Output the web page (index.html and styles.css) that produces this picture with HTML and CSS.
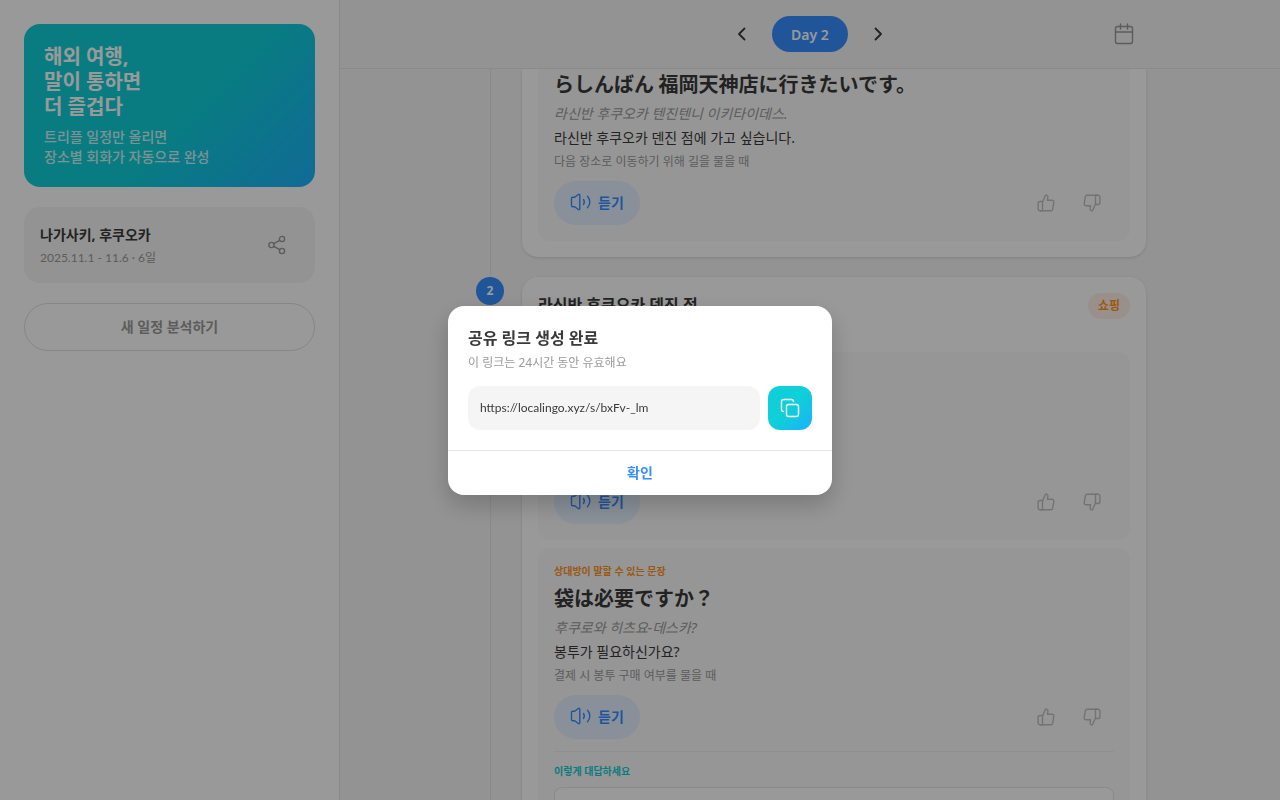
FILE: index.html
```html
<!DOCTYPE html>
<html lang="ko">
<head>
    <meta charset="UTF-8" />
    <meta name="viewport" content="width=device-width, initial-scale=1.0" />
    <title>Localingo</title>
    <link rel="stylesheet" href="styles.css">
</head>
<body>
    <!-- shared icons -->
    <svg class="sprite" aria-hidden="true">
        <symbol id="icon-volume" viewBox="0 0 22 20">
            <path d="M1.500 6.500v7c0 .8.500 1.200 1.200 1.200h2l3.600 2.800c.7.500 1.500.1 1.500-.7V3.200c0-.8-.8-1.200-1.500-.7L4.700 5.300h-2c-.7 0-1.200.4-1.200 1.200z" />
            <path d="M13.500 7.500a4.500 4.500 0 0 1 0 5" />
            <path d="M17.500 4.200a8.500 8.500 0 0 1 0 11.600" />
        </symbol>
        <symbol id="icon-like" viewBox="0 0 18 18">
            <path d="M5.500 8 8.300 1.800c.2-.5.7-.8 1.200-.7 1 .2 1.500 1 1.400 2l-.5 3.200h4.700c1.100 0 1.900 1 1.700 2l-1.200 7c-.2.900-.9 1.500-1.800 1.500H3.300" />
            <path d="M5.500 7.500v9.300H3.200c-1.200 0-2.100-.9-2.100-2.100V9.600c0-1.200.9-2.100 2.100-2.100z" />
        </symbol>
    </svg>

    <div class="app">
        <aside class="sidebar">
            <div class="banner">
                <h1>해외 여행,<br>말이 통하면<br>더 즐겁다</h1>
                <p>트리플 일정만 올리면<br>장소별 회화가 자동으로 완성</p>
            </div>

            <div class="trip">
                <div>
                    <h2>나가사키, 후쿠오카</h2>
                    <p>2025.11.1 - 11.6 · 6일</p>
                </div>
                <button class="icon-btn" aria-label="공유">
                    <svg width="20" height="20" viewBox="0 0 20 20">
                        <circle cx="15" cy="4" r="2.600" />
                        <circle cx="4.500" cy="10" r="2.600" />
                        <circle cx="15" cy="16" r="2.600" />
                        <path d="M6.800 8.700 12.700 5.300M6.800 11.300l5.900 3.400" />
                    </svg>
                </button>
            </div>

            <button class="new-btn">새 일정 분석하기</button>
        </aside>

        <main class="main">
            <header class="day-header">
                <div class="day-bar">
                    <nav class="day-nav">
                        <button class="icon-btn dark" aria-label="이전">
                            <svg width="20" height="20" viewBox="0 0 20 20"><path d="M12.500 4.500 7 10l5.500 5.500" /></svg>
                        </button>
                        <button class="day-pill">Day 2</button>
                        <button class="icon-btn dark" aria-label="다음">
                            <svg width="20" height="20" viewBox="0 0 20 20"><path d="M7.500 4.500 13 10l-5.500 5.500" /></svg>
                        </button>
                    </nav>
                    <button class="icon-btn calendar" aria-label="일정">
                        <svg width="24" height="24" viewBox="0 0 24 24">
                            <rect x="3.500" y="4.500" width="17" height="17" rx="2" />
                            <path d="M3.500 10h17M8.500 2v5M15.500 2v5" />
                        </svg>
                    </button>
                </div>
            </header>

            <div class="feed">
                <div class="timeline">
                    <section class="stop">
                        <div class="rail"></div>
                        <div class="card continued">
                            <article class="phrase">
                                <div class="phrase-text">
                                    <p class="ja" lang="ja">らしんばん 福岡天神店に行きたいです。</p>
                                    <p class="pron">라신반 후쿠오카 텐진텐니 이키타이데스.</p>
                                    <p class="ko">라신반 후쿠오카 덴진 점에 가고 싶습니다.</p>
                                    <p class="note">다음 장소로 이동하기 위해 길을 물을 때</p>
                                </div>
                                <div class="actions">
                                    <button class="listen"><svg width="22" height="20"><use href="#icon-volume" /></svg>듣기</button>
                                    <div class="votes">
                                        <button class="icon-btn" aria-label="좋아요"><svg width="18" height="18"><use href="#icon-like" /></svg></button>
                                        <button class="icon-btn down" aria-label="싫어요"><svg width="18" height="18"><use href="#icon-like" /></svg></button>
                                    </div>
                                </div>
                            </article>
                        </div>
                    </section>

                    <section class="stop">
                        <div class="rail"><span class="badge">2</span></div>
                        <div class="card">
                            <div class="card-head">
                                <h3>라신반 후쿠오카 덴진 점</h3>
                                <span class="tag">쇼핑</span>
                            </div>

                            <article class="phrase">
                                <div class="phrase-text"></div>
                                <div class="actions">
                                    <button class="listen"><svg width="22" height="20"><use href="#icon-volume" /></svg>듣기</button>
                                    <div class="votes">
                                        <button class="icon-btn" aria-label="좋아요"><svg width="18" height="18"><use href="#icon-like" /></svg></button>
                                        <button class="icon-btn down" aria-label="싫어요"><svg width="18" height="18"><use href="#icon-like" /></svg></button>
                                    </div>
                                </div>
                            </article>

                            <article class="phrase">
                                <p class="label orange">상대방이 말할 수 있는 문장</p>
                                <div class="phrase-text">
                                    <p class="ja" lang="ja">袋は必要ですか？</p>
                                    <p class="pron">후쿠로와 히츠요-데스카?</p>
                                    <p class="ko">봉투가 필요하신가요?</p>
                                    <p class="note">결제 시 봉투 구매 여부를 물을 때</p>
                                </div>
                                <div class="actions">
                                    <button class="listen"><svg width="22" height="20"><use href="#icon-volume" /></svg>듣기</button>
                                    <div class="votes">
                                        <button class="icon-btn" aria-label="좋아요"><svg width="18" height="18"><use href="#icon-like" /></svg></button>
                                        <button class="icon-btn down" aria-label="싫어요"><svg width="18" height="18"><use href="#icon-like" /></svg></button>
                                    </div>
                                </div>
                                <div class="replies">
                                    <p class="label teal">이렇게 대답하세요</p>
                                    <div class="reply"></div>
                                </div>
                            </article>
                        </div>
                    </section>
                </div>
            </div>
        </main>
    </div>

    <div class="overlay">
        <div class="dialog" role="dialog" aria-modal="true" aria-labelledby="dialog-title">
            <div class="dialog-body">
                <h2 id="dialog-title">공유 링크 생성 완료</h2>
                <p id="dialog-desc">이 링크는 24시간 동안 유효해요</p>
                <div class="link-row">
                    <input type="text" value="https://localingo.xyz/s/bxFv-_lm" aria-labelledby="dialog-title" readonly>
                    <button class="copy-btn" aria-label="복사">
                        <svg width="20" height="20" viewBox="0 0 20 20">
                            <rect x="6.500" y="6.500" width="12" height="12" rx="2" />
                            <path d="M3.500 13.500c-1.200 0-2-.8-2-2v-8c0-1.200.8-2 2-2h8c1.200 0 2 .8 2 2" />
                        </svg>
                    </button>
                </div>
            </div>
            <button class="confirm-btn">확인</button>
        </div>
    </div>
</body>
</html>
```

FILE: styles.css
```css
* {
    box-sizing: border-box;
}

body {
    margin: 0;
    font-family: "Noto Sans", "Noto Sans CJK KR", sans-serif;
    background: #f5f5f5;
    color: #3a3a3a;
    font-size: 14px;
}

h1, h2, h3, p {
    margin: 0;
}

button {
    border: none;
    background: none;
    padding: 0;
    font-family: inherit;
    font-size: 14px;
    cursor: pointer;
}

svg {
    fill: none;
    stroke: currentColor;
    stroke-width: 1.4;
    stroke-linecap: round;
    stroke-linejoin: round;
}

.sprite {
    display: none;
}

.app {
    display: flex;
    height: 100vh;
    overflow: hidden;
}

.icon-btn {
    display: flex;
    align-items: center;
    justify-content: center;
    width: 44px;
    height: 44px;
    color: #9a9a9a;
}

.icon-btn.dark {
    color: #3a3a3a;
}

.icon-btn.dark svg {
    stroke-width: 1.8;
}

/* Sidebar */
.sidebar {
    display: flex;
    flex-direction: column;
    gap: 20px;
    width: 340px;
    flex-shrink: 0;
    padding: 24px;
    background: #fff;
    border-right: 1px solid #e6e6e6;
}

.banner {
    padding: 20px;
    border-radius: 16px;
    background: linear-gradient(135deg, #0fcfd8 0%, #0fcfd8 55%, #1bb2fa 100%);
    color: #fff;
}

.banner h1 {
    font-size: 20px;
    line-height: 25px;
    margin-bottom: 8px;
}

.banner p {
    font-size: 14px;
    font-weight: 500;
    line-height: 20px;
    opacity: 0.8;
}

.trip {
    display: flex;
    align-items: center;
    justify-content: space-between;
    padding: 16px;
    border-radius: 16px;
    background: #f5f5f5;
}

.trip h2 {
    font-size: 14px;
    line-height: 21px;
    margin-bottom: 4px;
}

.trip p {
    font-family: Lato, "Noto Sans CJK KR", sans-serif;
    font-size: 12px;
    line-height: 18px;
    color: #9a9a9a;
}

.new-btn {
    height: 48px;
    padding-bottom: 2px;
    border: 1px solid #e0e0e0;
    border-radius: 24px;
    color: #9a9a9a;
    font-weight: 600;
}

/* Day header */
.main {
    display: flex;
    flex: 1;
    flex-direction: column;
    min-width: 0;
}

.day-header {
    padding: 12px 24px;
    border-bottom: 1px solid #e6e6e6;
}

.day-bar {
    display: grid;
    grid-template-columns: 1fr auto 1fr;
    align-items: center;
    max-width: 672px;
    margin: 0 auto;
}

.day-nav {
    display: flex;
    align-items: center;
    grid-column: 2;
    gap: 8px;
}

.day-pill {
    min-width: 76px;
    height: 36px;
    padding: 0 16px;
    border-radius: 18px;
    background: #368fff;
    color: #fff;
    font-weight: 600;
}

.calendar {
    justify-self: end;
}

/* Timeline */
.feed {
    flex: 1;
    overflow: hidden;
    padding: 0 24px;
}

.timeline {
    max-width: 672px;
    margin: 0 auto;
}

.stop {
    display: flex;
    gap: 16px;
}

.rail {
    display: flex;
    align-items: flex-start;
    justify-content: center;
    width: 32px;
    background: linear-gradient(#e6e6e6, #e6e6e6) 16px 0 / 1px 100% no-repeat;
}

.badge {
    width: 28px;
    height: 28px;
    border-radius: 50%;
    background: #368fff;
    color: #fff;
    font-size: 12px;
    font-weight: 700;
    line-height: 28px;
    text-align: center;
}

.card {
    display: flex;
    flex: 1;
    flex-direction: column;
    gap: 8px;
    min-width: 0;
    margin-bottom: 20px;
    padding: 16px;
    border-radius: 16px;
    background: #fff;
    box-shadow: 0 1px 3px rgba(0, 0, 0, 0.12);
}

.card.continued,
.continued .phrase {
    padding-top: 0;
    border-top-left-radius: 0;
    border-top-right-radius: 0;
}

.card-head {
    display: flex;
    align-items: flex-start;
    justify-content: space-between;
    min-height: 51px;
}

.card-head h3 {
    font-size: 16px;
    line-height: 24px;
}

.tag {
    padding: 0 10px;
    border-radius: 13px;
    background: #fff0e8;
    color: #ff9320;
    font-size: 12px;
    font-weight: 600;
    line-height: 26px;
}

.phrase {
    padding: 16px;
    border-radius: 12px;
    background: #fafafa;
}

.phrase-text {
    min-height: 102px;
    margin-bottom: 10px;
}

.label {
    margin-bottom: 4px;
    font-size: 10px;
    font-weight: 700;
    line-height: 15px;
}

.orange {
    color: #ff9320;
}

.teal {
    color: #0fcfd8;
}

.ja {
    margin-bottom: 4px;
    font-family: "Noto Sans CJK JP", sans-serif;
    font-size: 20px;
    font-weight: 700;
    line-height: 30px;
}

.pron {
    margin-bottom: 2px;
    color: #9a9a9a;
    font-style: italic;
    line-height: 22px;
}

.ko {
    margin-bottom: 4px;
    line-height: 22px;
}

.note {
    color: #9a9a9a;
    font-size: 12px;
    line-height: 18px;
}

.actions {
    display: flex;
    align-items: center;
    justify-content: space-between;
}

.listen {
    display: flex;
    align-items: center;
    gap: 6px;
    height: 44px;
    padding: 0 16px 2px;
    border-radius: 22px;
    background: #e6f1ff;
    color: #368fff;
    font-weight: 600;
}

.votes {
    display: flex;
    gap: 2px;
}

.votes .icon-btn {
    color: #c0c0c0;
}

.down svg {
    transform: rotate(180deg);
}

.replies {
    margin-top: 12px;
    padding-top: 12px;
    border-top: 1px solid #efefef;
}

.replies .label {
    margin-bottom: 8px;
}

.reply {
    min-height: 120px;
    border: 1px solid #e6e6e6;
    border-radius: 8px;
    background: #fff;
}

/* Share dialog */
.overlay {
    position: fixed;
    inset: 0;
    display: flex;
    align-items: center;
    justify-content: center;
    padding: 20px;
    background: rgba(0, 0, 0, 0.4);
}

.dialog {
    width: 100%;
    max-width: 384px;
    overflow: hidden;
    border-radius: 16px;
    background: #fff;
    box-shadow: 0 10px 24px rgba(0, 0, 0, 0.2);
}

.dialog-body {
    padding: 20px;
}

.dialog h2 {
    font-size: 16px;
    line-height: 24px;
    margin-bottom: 4px;
}

.dialog p {
    margin-bottom: 14px;
    color: #9a9a9a;
    font-size: 12px;
    line-height: 18px;
}

.link-row {
    display: flex;
    gap: 8px;
}

.link-row input {
    flex: 1;
    min-width: 0;
    height: 44px;
    padding: 0 12px;
    border: none;
    border-radius: 12px;
    outline: none;
    background: #f5f5f5;
    color: #3a3a3a;
    font-family: Lato, "Noto Sans CJK KR", sans-serif;
    font-size: 12px;
}

.copy-btn {
    display: flex;
    align-items: center;
    justify-content: center;
    width: 44px;
    height: 44px;
    border-radius: 12px;
    background: linear-gradient(135deg, #0fcfd8 0%, #0fcfd8 50%, #1bb2fa 100%);
    color: #fff;
}

.confirm-btn {
    display: block;
    width: 100%;
    height: 45px;
    padding-bottom: 2px;
    border-top: 1px solid #e6e6e6;
    color: #368fff;
    font-weight: 600;
}
```
